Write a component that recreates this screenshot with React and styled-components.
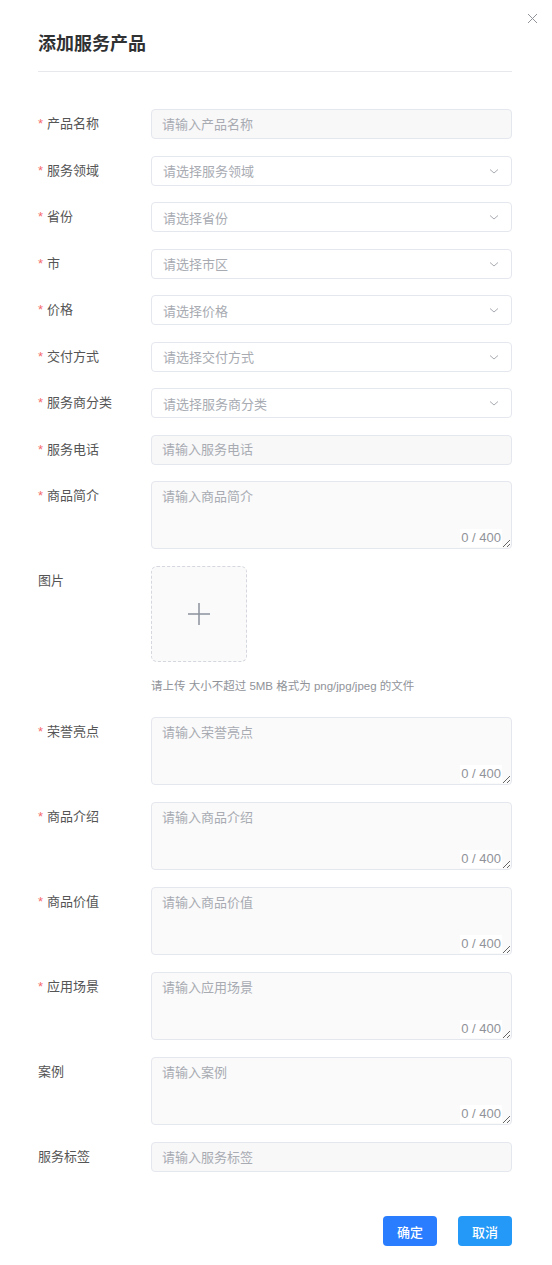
import React from 'react';
import styled, { createGlobalStyle } from 'styled-components';

const GlobalStyle = createGlobalStyle`
  html, body {
    margin: 0;
    padding: 0;
    background: #fff;
    overflow: hidden;
  }
  body {
    font-family: "Liberation Sans", "Noto Sans CJK SC", sans-serif;
    color: #606266;
  }
  * {
    box-sizing: border-box;
  }
`;

const Dialog = styled.div`
  position: relative;
  width: 552px;
  padding: 32px 40px 19px 38px;
`;

const CloseButton = styled.button`
  position: absolute;
  top: 12px;
  right: 14px;
  width: 12px;
  height: 12px;
  padding: 0;
  border: none;
  background: none;
  cursor: pointer;
  display: flex;
  align-items: center;
  justify-content: center;
`;

const Title = styled.h2`
  margin: 0;
  font-size: 18px;
  line-height: 24px;
  font-weight: 700;
  color: #303133;
`;

const Divider = styled.div`
  height: 1px;
  margin: 15px 0 37px;
  background: #e6e8eb;
`;

const Row = styled.div`
  display: grid;
  grid-template-columns: 113px 1fr;
  margin-bottom: ${p => p.$gap || 16.5}px;
`;

const Label = styled.label`
  font-size: 13px;
  line-height: 30px;
  color: #555;
  white-space: nowrap;
`;

const Star = styled.span`
  color: #f56c6c;
  margin-right: 4px;
`;

const fieldBase = `
  width: 100%;
  border-radius: 4px;
  font-family: inherit;
  font-size: 13px;
  color: #303133;
  outline: none;
  &::placeholder {
    color: #a8abb2;
  }
`;

const TextInput = styled.input`
  ${fieldBase}
  height: 30px;
  padding: 0 10px;
  border: 1px solid #e4e7ed;
  background: #f8f8f9;
`;

const SelectBox = styled.div`
  height: 30px;
  padding: 0 11px;
  border: 1px solid #e4e7ed;
  border-radius: 4px;
  background: #fff;
  display: flex;
  align-items: center;
  justify-content: space-between;
  font-size: 13px;
  color: #a8abb2;
`;

const AreaWrap = styled.div`
  position: relative;
  height: 68px;
`;

const TextArea = styled.textarea`
  ${fieldBase}
  display: block;
  height: 68px;
  padding: 5px 10px;
  line-height: 20px;
  border: 1px solid #e4e7ed;
  background: #fafafa;
  resize: vertical;
`;

const Counter = styled.span`
  position: absolute;
  right: 10px;
  bottom: 2px;
  padding: 0 1px;
  font-size: 13px;
  line-height: 18px;
  color: #909399;
  background: #fff;
`;

const Upload = styled.div`
  width: 96px;
  height: 96px;
  border: 1px dashed #d4d7de;
  border-radius: 6px;
  background: #fafafa;
  display: flex;
  align-items: center;
  justify-content: center;
`;

const Hint = styled.div`
  margin: 15px 0 5px;
  font-size: 11.5px;
  line-height: 18px;
  color: #909399;
`;

const Footer = styled.div`
  display: flex;
  justify-content: flex-end;
  gap: 21px;
  padding-top: 27px;
`;

const Button = styled.button`
  width: 54px;
  height: 30px;
  border: none;
  border-radius: 4px;
  background: ${p => p.$bg};
  color: #fff;
  font-family: inherit;
  font-size: 13px;
  font-weight: 500;
  cursor: pointer;
`;

const Chevron = () => (
  <svg width="12" height="12" viewBox="0 0 12 12" fill="none">
    <path d="M2 4.5 L6 8 L10 4.5" stroke="#a8abb2" strokeWidth="1" />
  </svg>
);

const Field = ({ label, required, gap, children }) => (
  <Row $gap={gap}>
    <Label>
      {required && <Star>*</Star>}
      {label}
    </Label>
    <div>{children}</div>
  </Row>
);

const Area = ({ placeholder }) => (
  <AreaWrap>
    <TextArea placeholder={placeholder} />
    <Counter>0 / 400</Counter>
  </AreaWrap>
);

const selects = [
  ['服务领域', '请选择服务领域'],
  ['省份', '请选择省份'],
  ['市', '请选择市区'],
  ['价格', '请选择价格'],
  ['交付方式', '请选择交付方式'],
  ['服务商分类', '请选择服务商分类'],
];

const areas = [
  ['荣誉亮点', '请输入荣誉亮点', true],
  ['商品介绍', '请输入商品介绍', true],
  ['商品价值', '请输入商品价值', true],
  ['应用场景', '请输入应用场景', true],
  ['案例', '请输入案例', false],
];

export default function App() {
  return (
    <>
      <GlobalStyle />
      <Dialog>
        <CloseButton aria-label="close">
          <svg width="11" height="11" viewBox="0 0 11 11">
            <path d="M1 1 L10 10 M10 1 L1 10" stroke="#909399" strokeWidth="1" />
          </svg>
        </CloseButton>
        <Title>添加服务产品</Title>
        <Divider />

        <Field label="产品名称" required>
          <TextInput placeholder="请输入产品名称" />
        </Field>
        {selects.map(([label, ph]) => (
          <Field key={label} label={label} required>
            <SelectBox>
              <span>{ph}</span>
              <Chevron />
            </SelectBox>
          </Field>
        ))}
        <Field label="服务电话" required>
          <TextInput placeholder="请输入服务电话" />
        </Field>
        <Field label="商品简介" required gap={17}>
          <Area placeholder="请输入商品简介" />
        </Field>
        <Field label="图片" gap={17}>
          <Upload>
            <svg width="24" height="24" viewBox="0 0 24 24">
              <path d="M12 1 V23 M1 12 H23" stroke="#8c939d" strokeWidth="1.5" />
            </svg>
          </Upload>
          <Hint>请上传 大小不超过 5MB 格式为 png/jpg/jpeg 的文件</Hint>
        </Field>
        {areas.map(([label, ph, req]) => (
          <Field key={label} label={label} required={req} gap={17}>
            <Area placeholder={ph} />
          </Field>
        ))}
        <Field label="服务标签" gap={17}>
          <TextInput placeholder="请输入服务标签" />
        </Field>

        <Footer>
          <Button $bg="#2a7dff">确定</Button>
          <Button $bg="#2499f8">取消</Button>
        </Footer>
      </Dialog>
    </>
  );
}
